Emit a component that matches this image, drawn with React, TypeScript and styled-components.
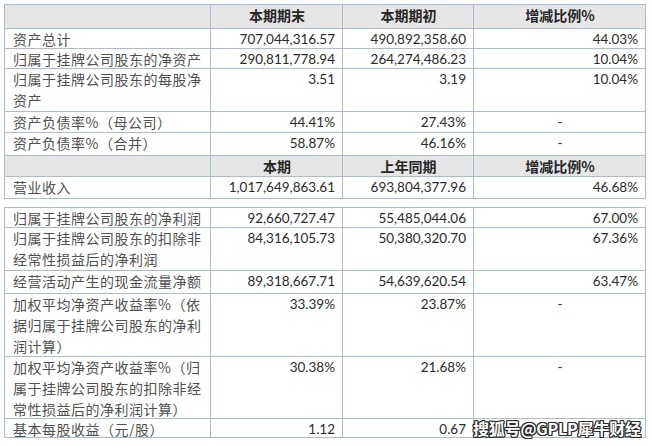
import React from "react";
import styled, { createGlobalStyle } from "styled-components";

const Global = createGlobalStyle`
  html, body { margin: 0; padding: 0; background: #ffffff; }
  body { font-family: "Noto Sans CJK SC", sans-serif; }
`;

const Page = styled.div`
  position: relative;
  width: 652px;
  height: 446px;
  padding: 4px 0 0 4px;
  box-sizing: border-box;
  display: flex;
  flex-direction: column;
  gap: 8px;
  overflow: hidden;
`;

const Table = styled.div`
  display: flex;
  flex-direction: column;
  width: 641px;
  border-top: 1px solid #a9bdd0;
  border-left: 1px solid #a9bdd0;
`;

const Row = styled.div<{ $h: number; $head?: boolean }>`
  display: grid;
  grid-template-columns: 206px 132px 131px 172px;
  height: ${(p) => p.$h}px;
  background: ${(p) => (p.$head ? "#e6e6e6" : "#ffffff")};
`;

const Cell = styled.div<{ $align?: "left" | "right" | "center" }>`
  box-sizing: border-box;
  border-right: 1px solid #a9bdd0;
  border-bottom: 1px solid #a9bdd0;
  padding: 0 7px 0 8px;
  text-align: ${(p) => p.$align ?? "right"};
  line-height: 21px;
  overflow: hidden;
`;

const Label = styled(Cell)`
  font-family: "Noto Sans CJK SC", sans-serif;
  font-size: 14px;
  letter-spacing: 0.5px;
  color: #505050;
  text-align: left;
  white-space: nowrap;
`;

const Head = styled(Cell)`
  font-family: "Noto Sans CJK SC", sans-serif;
  font-size: 14px;
  font-weight: 700;
  color: #262626;
  text-align: center;
`;

const Num = styled(Cell)`
  font-family: Lato, "Liberation Sans", sans-serif;
  font-size: 13.5px;
  color: #2b2b2b;
`;

const Watermark = styled.div`
  position: absolute;
  left: 473px;
  top: 417px;
  font-family: "Noto Sans CJK SC", sans-serif;
  font-size: 16px;
  font-weight: 700;
  line-height: 22px;
  color: #ffffff;
  letter-spacing: -0.2px;
  text-shadow: 1px 0 0 #2a2a2a, -1px 0 0 #2a2a2a, 0 1px 0 #2a2a2a, 0 -1px 0 #2a2a2a,
    1px 1px 0 #2a2a2a, -1px -1px 0 #2a2a2a, 1px -1px 0 #2a2a2a, -1px 1px 0 #2a2a2a;
`;

type R = { label: string[]; a: string; b: string; c: string; h: number };

const top: R[] = [
  { label: ["资产总计"], a: "707,044,316.57", b: "490,892,358.60", c: "44.03%", h: 20 },
  { label: ["归属于挂牌公司股东的净资产"], a: "290,811,778.94", b: "264,274,486.23", c: "10.04%", h: 20 },
  { label: ["归属于挂牌公司股东的每股净", "资产"], a: "3.51", b: "3.19", c: "10.04%", h: 43 },
  { label: ["资产负债率%（母公司）"], a: "44.41%", b: "27.43%", c: "-", h: 21 },
  { label: ["资产负债率%（合并）"], a: "58.87%", b: "46.16%", c: "-", h: 23 },
];

const bottom: R[] = [
  { label: ["归属于挂牌公司股东的净利润"], a: "92,660,727.47", b: "55,485,044.06", c: "67.00%", h: 20 },
  { label: ["归属于挂牌公司股东的扣除非", "经常性损益后的净利润"], a: "84,316,105.73", b: "50,380,320.70", c: "67.36%", h: 43 },
  { label: ["经营活动产生的现金流量净额"], a: "89,318,667.71", b: "54,639,620.54", c: "63.47%", h: 23 },
  { label: ["加权平均净资产收益率%（依", "据归属于挂牌公司股东的净利", "润计算）"], a: "33.39%", b: "23.87%", c: "-", h: 63 },
  { label: ["加权平均净资产收益率%（归", "属于挂牌公司股东的扣除非经", "常性损益后的净利润计算）"], a: "30.38%", b: "21.68%", c: "-", h: 62 },
  { label: ["基本每股收益（元/股）"], a: "1.12", b: "0.67", c: "", h: 19 },
];

function DataRow({ r }: { r: R }) {
  return (
    <Row $h={r.h}>
      <Label>
        {r.label.map((l, i) => (
          <div key={i}>{l}</div>
        ))}
      </Label>
      <Num>{r.a}</Num>
      <Num>{r.b}</Num>
      <Num $align={r.c === "-" ? "center" : "right"}>{r.c}</Num>
    </Row>
  );
}

export default function App() {
  return (
    <>
      <Global />
      <Page>
        <Table>
          <Row $h={24} $head>
            <Head />
            <Head>本期期末</Head>
            <Head>本期期初</Head>
            <Head>增减比例%</Head>
          </Row>
          {top.map((r, i) => (
            <DataRow key={i} r={r} />
          ))}
          <Row $h={21} $head>
            <Head />
            <Head>本期</Head>
            <Head>上年同期</Head>
            <Head>增减比例%</Head>
          </Row>
          <DataRow r={{ label: ["营业收入"], a: "1,017,649,863.61", b: "693,804,377.96", c: "46.68%", h: 22 }} />
        </Table>
        <Table>
          {bottom.map((r, i) => (
            <DataRow key={i} r={r} />
          ))}
        </Table>
        <Watermark>搜狐号@GPLP犀牛财经</Watermark>
      </Page>
    </>
  );
}
